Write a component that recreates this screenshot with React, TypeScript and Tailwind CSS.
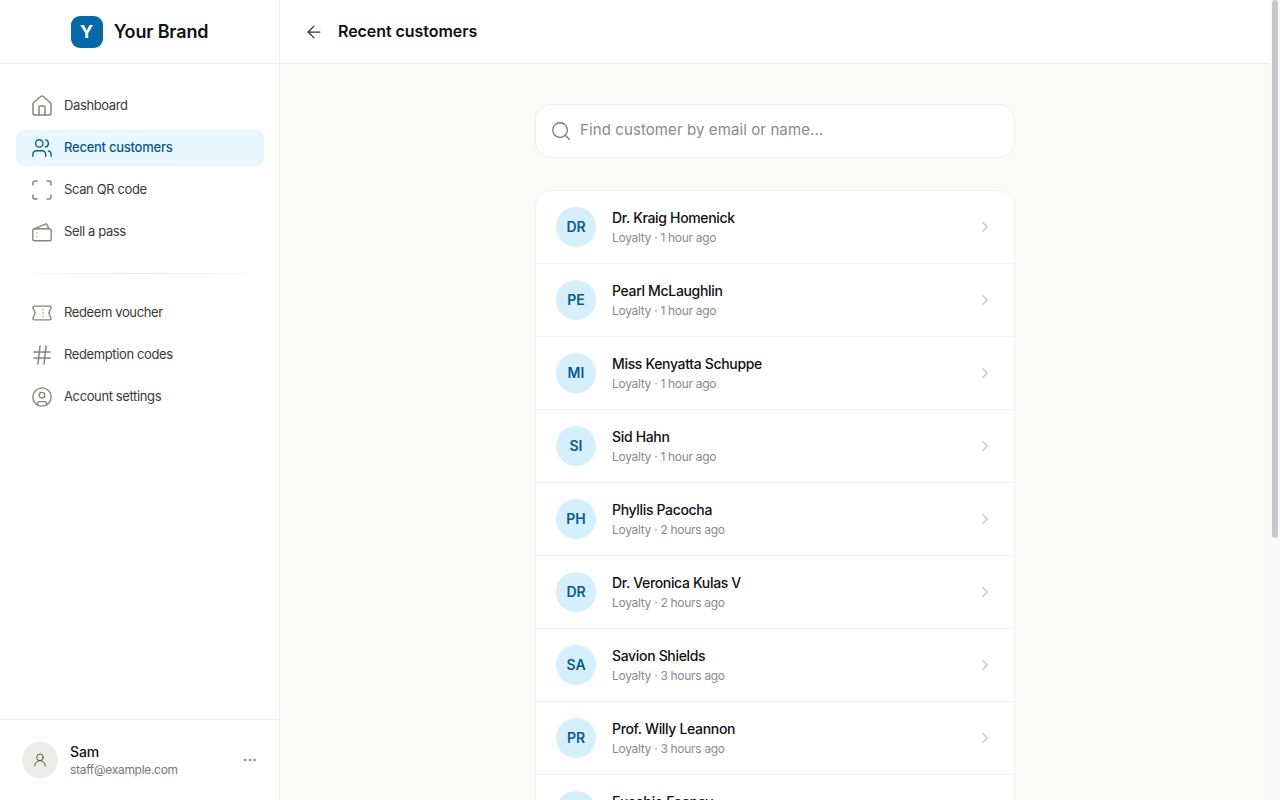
import { ArrowLeft, ChevronRight, Ellipsis, Hash, House, Scan, Search, UserRound, Users, CircleUser } from 'lucide-react';
import type { SVGProps } from 'react';

// lucide has no match for these two
function PassIcon({ size = 22, strokeWidth = 1.5, ...props }: SVGProps<SVGSVGElement> & { size?: number }) {
  return (
    <svg width={size} height={size} viewBox="0 0 24 24" fill="none" stroke="currentColor" strokeWidth={strokeWidth} strokeLinecap="round" strokeLinejoin="round" {...props}>
      <rect x="2" y="8.5" width="20" height="13" rx="2" />
      <path d="M3.5 8.5 15.5 3.5c1-.4 1.8 0 2.2.9l1.7 4.1" />
      <path d="M6.5 13v.01M6.5 17v.01" />
    </svg>
  );
}

function VoucherIcon({ size = 22, strokeWidth = 1.5, ...props }: SVGProps<SVGSVGElement> & { size?: number }) {
  return (
    <svg width={size} height={size} viewBox="0 0 24 24" fill="none" stroke="currentColor" strokeWidth={strokeWidth} strokeLinecap="round" strokeLinejoin="round" {...props}>
      <path d="M3.5 4.5h17A1.5 1.5 0 0 1 22 6l-2.5 6 2.5 6a1.5 1.5 0 0 1-1.5 1.5h-17A1.5 1.5 0 0 1 2 18l2.5-6L2 6a1.5 1.5 0 0 1 1.5-1.5Z" />
      <path d="M13 8.5v.01M13 12v.01M13 15.5v.01" />
    </svg>
  );
}

const navTop = [
  { label: 'Dashboard', icon: House, size: 24 },
  { label: 'Recent customers', icon: Users, size: 22, active: true },
  { label: 'Scan QR code', icon: Scan, size: 24 },
  { label: 'Sell a pass', icon: PassIcon, size: 22 },
];

const navBottom = [
  { label: 'Redeem voucher', icon: VoucherIcon, size: 22 },
  { label: 'Redemption codes', icon: Hash, size: 24 },
  { label: 'Account settings', icon: CircleUser, size: 22 },
];

const customers = [
  { initials: 'DR', name: 'Dr. Kraig Homenick', time: '1 hour ago' },
  { initials: 'PE', name: 'Pearl McLaughlin', time: '1 hour ago' },
  { initials: 'MI', name: 'Miss Kenyatta Schuppe', time: '1 hour ago' },
  { initials: 'SI', name: 'Sid Hahn', time: '1 hour ago' },
  { initials: 'PH', name: 'Phyllis Pacocha', time: '2 hours ago' },
  { initials: 'DR', name: 'Dr. Veronica Kulas V', time: '2 hours ago' },
  { initials: 'SA', name: 'Savion Shields', time: '3 hours ago' },
  { initials: 'PR', name: 'Prof. Willy Leannon', time: '3 hours ago' },
  { initials: 'EU', name: 'Eusebio Feeney', time: '3 hours ago' },
];

interface NavItemProps {
  label: string;
  icon: typeof PassIcon | typeof House;
  size: number;
  active?: boolean;
}

function NavItem({ label, icon: Icon, size, active }: NavItemProps) {
  return (
    <a
      className={
        active
          ? 'flex h-9 items-center rounded-lg bg-[#e8f6fe] px-3.5 text-[13px] font-medium tracking-[-0.25px] text-[#0b5a8f]'
          : 'flex h-9 items-center rounded-lg px-3.5 text-[13px] tracking-[-0.38px] text-[#3a3a37]'
      }
    >
      <span className="mr-2.5 flex w-6 justify-center">
        <Icon size={size} strokeWidth={1.5} className={active ? 'text-[#0b5a8f]' : 'text-[#85857f]'} />
      </span>
      {label}
    </a>
  );
}

export default function App() {
  return (
    <div className="relative flex h-[800px] overflow-hidden bg-[#fbfbf8] font-['Inter',sans-serif]">
      <aside className="flex w-[280px] shrink-0 flex-col border-r border-[#f0f0eb] bg-white">
        <div className="flex h-16 items-center justify-center gap-[11px] border-b border-[#eeeee6]">
          <div className="flex h-8 w-8 items-center justify-center rounded-[9px] bg-[#0369a8] text-lg font-bold text-white">Y</div>
          <span className="text-lg font-semibold tracking-[-0.15px] text-[#111]">Your Brand</span>
        </div>
        <nav className="flex flex-1 flex-col pt-6 pr-[15px] pl-4">
          <div className="flex flex-col gap-1.5">
            {navTop.map((item) => (
              <NavItem key={item.label} {...item} />
            ))}
          </div>
          <div className="mx-4 mt-[23px] mb-[21px] h-px bg-linear-to-r from-[#f8f8f4] via-[#eeebe0] to-[#f8f8f4]" />
          <div className="flex flex-col gap-1.5">
            {navBottom.map((item) => (
              <NavItem key={item.label} {...item} />
            ))}
          </div>
        </nav>
        <div className="flex h-[81px] items-center gap-3 border-t border-[#eeeeea] pr-[21px] pl-[22px]">
          <div className="flex h-9 w-9 items-center justify-center rounded-full bg-[#edece7]">
            <UserRound size={16} strokeWidth={1.5} className="text-[#55554f]" />
          </div>
          <div className="flex-1 pt-0.5">
            <div className="text-sm leading-[18px] font-medium tracking-[-0.1px] text-[#111]">Sam</div>
            <div className="text-xs leading-[18px] tracking-[-0.3px] text-[#77777a]">staff@example.com</div>
          </div>
          <Ellipsis size={16} className="text-[#88888a]" />
        </div>
      </aside>
      <div className="flex min-w-0 flex-1 flex-col pr-2.5">
        <header className="flex h-16 shrink-0 items-center gap-3.5 border-b border-[#eeeee6] bg-white px-6">
          <ArrowLeft size={20} strokeWidth={1.5} className="text-[#333]" />
          <h1 className="pb-0.5 text-base font-semibold tracking-[-0.05px] text-[#111]">Recent customers</h1>
        </header>
        <main className="flex flex-1 flex-col items-center overflow-hidden pt-10">
          <div className="flex h-[54px] w-[480px] shrink-0 items-center gap-2 rounded-2xl border border-[#eeeeea] bg-white pr-4 pl-3.5">
            <Search size={22} strokeWidth={1.4} className="text-[#77777a]" />
            <span className="pb-0.5 text-[15px] tracking-[0.1px] text-[#8a8a8a]">Find customer by email or name...</span>
          </div>
          <div className="mt-8 w-[480px] shrink-0 rounded-2xl border border-[#f3f3ef] bg-white">
            {customers.map((c) => (
              <div key={c.name} className="flex h-[73px] items-center gap-4 border-b border-[#f3f3ef] px-5">
                <div className="flex h-10 w-10 items-center justify-center rounded-full bg-[#d5effc] text-sm font-semibold text-[#0b5a8f]">{c.initials}</div>
                <div className="flex-1">
                  <div className="text-sm leading-5 font-medium tracking-[-0.33px] text-[#111]">{c.name}</div>
                  <div className="mt-0.5 text-xs leading-4 tracking-[-0.3px] text-[#8a8a8a]">Loyalty · {c.time}</div>
                </div>
                <ChevronRight size={18} strokeWidth={1.5} className="text-[#c4c4c4]" />
              </div>
            ))}
          </div>
        </main>
      </div>
      <div className="absolute top-0 right-0 bottom-0 w-2.5 bg-[#fafafa]">
        <div className="ml-0.5 h-[538px] w-1.5 rounded-sm bg-[#c8c8cf]" />
      </div>
    </div>
  );
}
